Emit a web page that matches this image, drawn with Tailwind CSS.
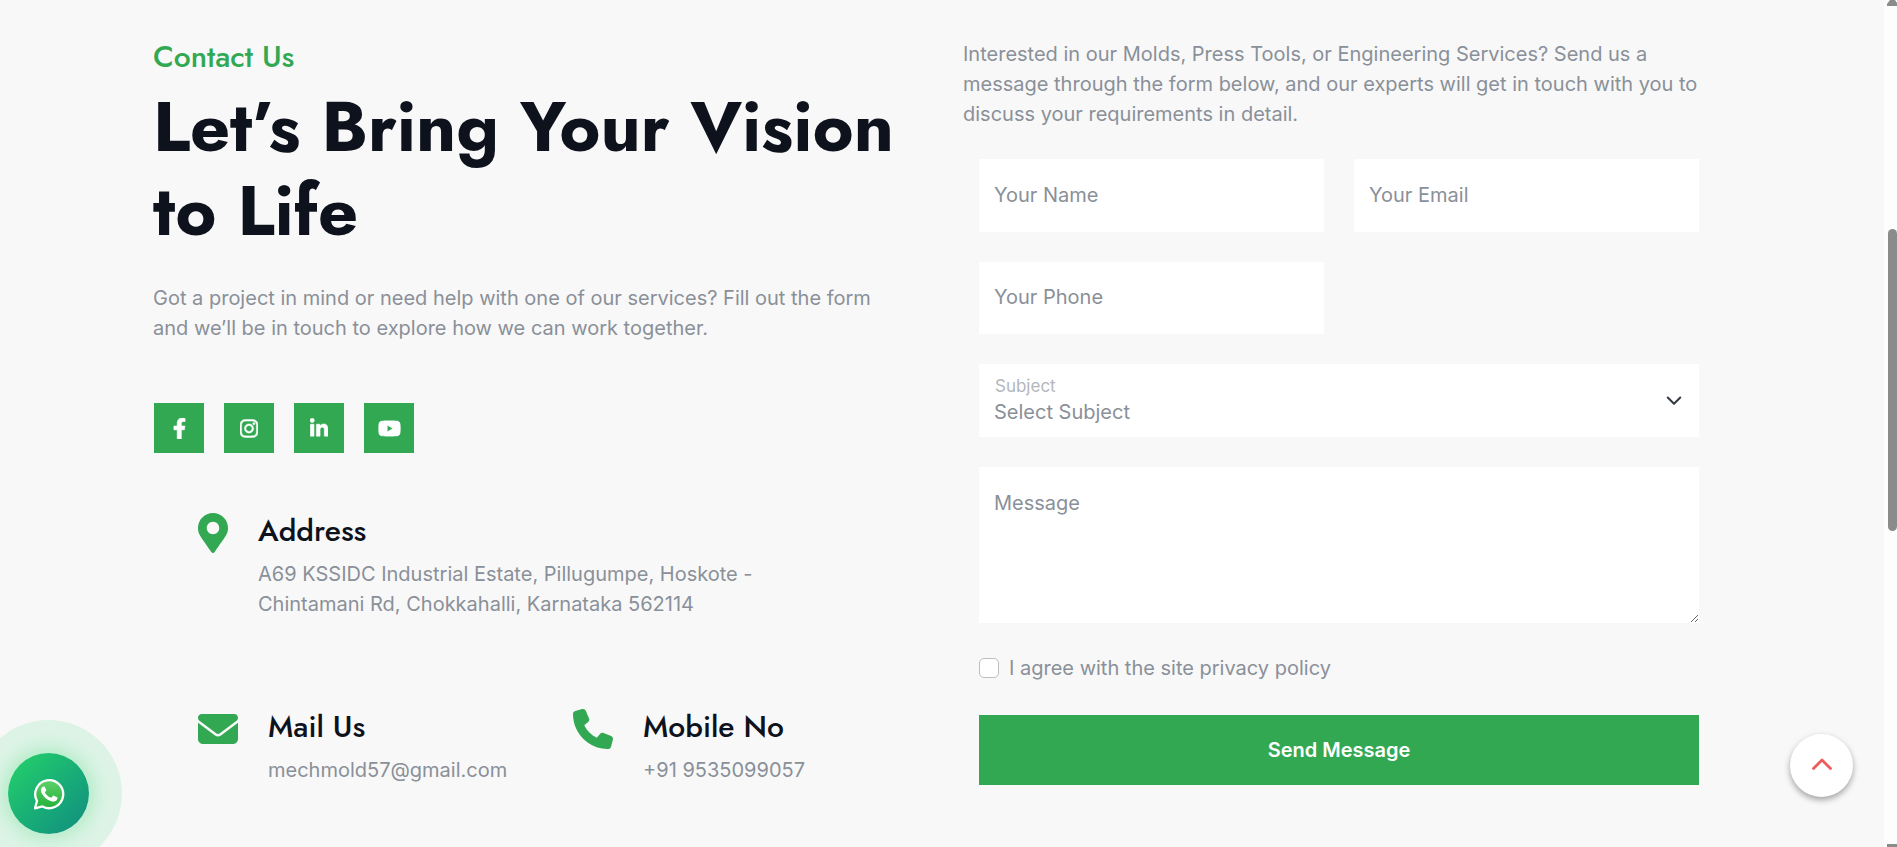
<!DOCTYPE html>
<html lang="en">
<head>
<meta charset="utf-8">
<meta name="viewport" content="width=device-width, initial-scale=1">
<title>Contact Us</title>
<script src="https://cdn.jsdelivr.net/npm/@tailwindcss/browser@4"></script>
</head>
<body class="flex min-h-screen overflow-hidden bg-[#f8f8f8] font-['Inter',sans-serif] text-[20px] leading-[30px] text-[#8a9099]">

<main class="grid min-w-0 flex-1 grid-cols-2 gap-[60px] pt-[38px] pr-[171px] pl-[153px]">
  <section>
    <p class="font-['Jost','Lato',sans-serif] text-[30px] leading-[38px] font-medium text-[#32a852]">Contact Us</p>
    <h1 class="mt-[9px] font-['Jost','Lato',sans-serif] text-[70px] leading-[84px] font-bold text-[#0d121d]">Let’s Bring Your Vision to Life</h1>
    <p class="mt-[30px] pr-4">Got a project in mind or need help with one of our services? Fill out the form and we’ll be in touch to explore how we can work together.</p>

    <nav class="mt-[60px] flex gap-5 pl-px" aria-label="Social media">
      <a href="#" aria-label="Facebook" class="flex size-[50px] items-center justify-center bg-[#32a852] text-white">
        <svg class="h-[21px] w-[13px]" viewBox="0 0 320 512" fill="currentColor" stroke="currentColor" stroke-width="16"><path d="M279.14 288l14.22-92.66h-88.91v-60.13c0-25.35 12.42-50.06 52.24-50.06h40.42V6.26S260.43 0 225.36 0c-73.22 0-121.08 44.38-121.08 124.72v70.62H22.89V288h81.39v224h100.17V288z"/></svg>
      </a>
      <a href="#" aria-label="Instagram" class="flex size-[50px] items-center justify-center bg-[#32a852] text-white">
        <svg class="h-[21px] w-[18px]" viewBox="0 0 448 512" fill="currentColor" stroke="currentColor" stroke-width="12"><path d="M224.1 141c-63.6 0-114.9 51.3-114.9 114.9s51.3 114.9 114.9 114.9S339 319.5 339 255.9 287.7 141 224.1 141zm0 189.6c-41.1 0-74.7-33.5-74.7-74.7s33.5-74.7 74.7-74.7 74.7 33.5 74.7 74.7-33.6 74.7-74.7 74.7zm146.4-194.3c0 14.9-12 26.8-26.8 26.8-14.9 0-26.8-12-26.8-26.8s12-26.8 26.8-26.8 26.8 12 26.8 26.8zm76.1 27.2c-1.7-35.9-9.9-67.7-36.2-93.9-26.2-26.2-58-34.4-93.9-36.2-37-2.1-147.9-2.1-184.9 0-35.8 1.7-67.6 9.9-93.9 36.1s-34.4 58-36.2 93.9c-2.1 37-2.1 147.9 0 184.9 1.7 35.9 9.9 67.7 36.2 93.9s58 34.4 93.9 36.2c37 2.1 147.9 2.1 184.9 0 35.9-1.7 67.7-9.9 93.9-36.2 26.2-26.2 34.4-58 36.2-93.9 2.1-37 2.1-147.8 0-184.8zM398.8 388c-7.8 19.6-22.9 34.7-42.6 42.6-29.5 11.7-99.5 9-132.1 9s-102.7 2.6-132.1-9c-19.6-7.8-34.7-22.9-42.6-42.6-11.7-29.5-9-99.5-9-132.1s-2.6-102.7 9-132.1c7.8-19.6 22.9-34.7 42.6-42.6 29.5-11.7 99.5-9 132.1-9s102.7-2.6 132.1 9c19.6 7.8 34.7 22.9 42.6 42.6 11.7 29.5 9 99.5 9 132.1s2.7 102.7-9 132.1z"/></svg>
      </a>
      <a href="#" aria-label="LinkedIn" class="flex size-[50px] items-center justify-center bg-[#32a852] text-white">
        <svg class="h-[21px] w-[18px]" viewBox="0 0 448 512" fill="currentColor" stroke="currentColor" stroke-width="12"><path d="M100.28 448H7.4V148.9h92.88zM53.79 108.1C24.09 108.1 0 83.5 0 53.8a53.79 53.79 0 0 1 107.58 0c0 29.7-24.1 54.3-53.79 54.3zM447.9 448h-92.68V302.4c0-34.7-.7-79.2-48.29-79.2-48.29 0-55.69 37.7-55.69 76.7V448h-92.78V148.9h89.08v40.8h1.3c12.4-23.5 42.69-48.3 87.88-48.3 94 0 111.28 61.9 111.28 142.3V448z"/></svg>
      </a>
      <a href="#" aria-label="YouTube" class="flex size-[50px] items-center justify-center bg-[#32a852] text-white">
        <svg class="h-[21px] w-[23px]" viewBox="0 0 576 512" fill="currentColor" stroke="currentColor" stroke-width="12"><path d="M549.655 124.083c-6.281-23.65-24.787-42.276-48.284-48.597C458.781 64 288 64 288 64S117.22 64 74.629 75.486c-23.497 6.322-42.003 24.947-48.284 48.597-11.412 42.867-11.412 132.305-11.412 132.305s0 89.438 11.412 132.305c6.281 23.65 24.787 41.5 48.284 47.821C117.22 448 288 448 288 448s170.78 0 213.371-11.486c23.497-6.321 42.003-24.171 48.284-47.821 11.412-42.867 11.412-132.305 11.412-132.305s0-89.438-11.412-132.305zm-317.51 213.508V175.185l142.739 81.205-142.739 81.201z"/></svg>
      </a>
    </nav>

    <address class="mt-[60px] flex flex-col gap-20 pl-[45px] not-italic">
      <div class="flex gap-[30px]">
        <svg class="h-10 w-[30px] shrink-0 text-[#32a852]" viewBox="0 0 384 512" fill="currentColor"><path d="M172.268 501.670C26.970 291.031 0 269.413 0 192 0 85.961 85.961 0 192 0s192 85.961 192 192c0 77.413-26.970 99.031-172.268 309.670-9.535 13.774-29.930 13.773-39.464 0zM192 272c44.183 0 80-35.817 80-80s-35.817-80-80-80-80 35.817-80 80 35.817 80 80 80z"/></svg>
        <div>
          <h2 class="font-['Jost','Lato',sans-serif] text-[30px] leading-9 font-medium text-[#0d121d]">Address</h2>
          <p class="mt-[10px]">A69 KSSIDC Industrial Estate, Pillugumpe, Hoskote -<br>Chintamani Rd, Chokkahalli, Karnataka 562114</p>
        </div>
      </div>
      <div class="flex">
        <div class="flex w-[375px] gap-[30px]">
          <svg class="mt-[10px] h-10 w-10 shrink-0 text-[#32a852]" viewBox="0 0 512 512" fill="currentColor"><path d="M48 64C21.500 64 0 85.500 0 112c0 15.100 7.100 29.300 19.200 38.400L236.800 313.600c11.400 8.500 27 8.500 38.400 0L492.800 150.400c12.100-9.100 19.200-23.300 19.200-38.400c0-26.500-21.500-48-48-48H48zM0 176V384c0 35.300 28.700 64 64 64H448c35.300 0 64-28.700 64-64V176L294.400 339.200c-22.800 17.100-54 17.100-76.800 0L0 176z"/></svg>
          <div class="mt-[10px]">
            <h2 class="font-['Jost','Lato',sans-serif] text-[30px] leading-9 font-medium text-[#0d121d]">Mail Us</h2>
            <p class="mt-[10px]"><a href="mailto:mechmold57@gmail.com">mechmold57@gmail.com</a></p>
          </div>
        </div>
        <div class="flex gap-[30px]">
          <svg class="mt-[10px] h-10 w-10 shrink-0 text-[#32a852]" viewBox="0 0 512 512" fill="currentColor"><path d="M164.900 24.600c-7.700-18.600-28-28.500-47.400-23.200l-88 24C12.100 30.200 0 46 0 64C0 311.400 200.600 512 448 512c18 0 33.800-12.100 38.600-29.500l24-88c5.300-19.400-4.600-39.700-23.200-47.400l-96-40c-16.300-6.800-35.200-2.100-46.300 11.600L304.700 368C234.300 334.700 177.300 277.700 144 207.300L193.300 167c13.700-11.200 18.400-30 11.600-46.300l-40-96z"/></svg>
          <div class="mt-[10px]">
            <h2 class="font-['Jost','Lato',sans-serif] text-[30px] leading-9 font-medium text-[#0d121d]">Mobile No</h2>
            <p class="mt-[10px]"><a href="tel:+919535099057">+91 9535099057</a></p>
          </div>
        </div>
      </div>
    </address>
  </section>

  <section class="pt-px">
    <p class="pr-[14px]">Interested in our Molds, Press Tools, or Engineering Services? Send us a message through the form below, and our experts will get in touch with you to discuss your requirements in detail.</p>
    <form class="mt-[30px] grid grid-cols-2 gap-[30px] pr-[14px] pl-4">
      <input type="text" aria-label="Your Name" placeholder="Your Name" class="h-[73px] w-full bg-white px-[15px] pb-0.5 placeholder:text-[#8a9099] outline-none">
      <input type="email" aria-label="Your Email" placeholder="Your Email" class="h-[73px] w-full bg-white px-[15px] pb-0.5 placeholder:text-[#8a9099] outline-none">
      <input type="tel" aria-label="Your Phone" placeholder="Your Phone" class="h-[72px] w-full bg-white px-[15px] pb-0.5 placeholder:text-[#8a9099] outline-none">
      <div class="relative col-span-2">
        <label for="subject" class="pointer-events-none absolute top-2 left-4 text-[17px] leading-7 text-[#b3b7bd]">Subject</label>
        <select id="subject" class="block h-[73px] w-full appearance-none bg-white pt-[22px] pr-12 pl-[15px] outline-none">
          <option>Select Subject</option>
        </select>
        <svg class="pointer-events-none absolute top-[26px] right-[15px] size-5 text-[#343a40]" viewBox="0 0 16 16" fill="none" stroke="currentColor" stroke-width="1.600" stroke-linecap="round" stroke-linejoin="round"><path d="m3 6 5 5 5-5"/></svg>
      </div>
      <textarea aria-label="Message" placeholder="Message" class="col-span-2 block h-[156px] w-full resize bg-white px-[15px] pt-[21px] placeholder:text-[#8a9099] outline-none"></textarea>
      <div class="col-span-2 flex items-center gap-[10px] pb-0.5">
        <input type="checkbox" id="agree" class="size-5 appearance-none rounded-[5px] border border-[#bfbfbf] bg-white checked:bg-[#32a852]">
        <label for="agree">I agree with the site privacy policy</label>
      </div>
      <button type="submit" class="col-span-2 h-[70px] bg-[#32a852] font-semibold text-white">Send Message</button>
    </form>
  </section>
</main>

<!-- Scroll track -->
<aside class="relative w-[13px] shrink-0 bg-[#fdfdfd]" aria-hidden="true">
  <svg class="absolute top-0 right-0 h-[6px] w-[10px]" viewBox="0 0 10 6" fill="#8b8b8b"><path d="M3 0h5l2 3v3H0V4z"/></svg>
  <div class="absolute top-[229px] right-0 h-[302px] w-[9px] rounded-full bg-[#8b8b8b]"></div>
  <div class="absolute right-0 bottom-0 h-[3px] w-[10px] bg-[#8b8b8b]"></div>
</aside>

<!-- WhatsApp launcher with pulse ring -->
<a href="#" aria-label="Chat on WhatsApp" class="fixed bottom-[13px] left-2 flex size-[81px] items-center justify-center rounded-full bg-linear-135 from-[#25d366] to-[#128c7e] shadow-[0_0_0_33px_rgba(37,211,102,0.12),0_0_25px_rgba(37,211,102,0.4)]">
  <svg class="size-8" viewBox="0 0 32 32">
    <defs><linearGradient id="wa" x1="0" y1="0" x2="0" y2="1"><stop offset="0" stop-color="#5fd16a"/><stop offset="1" stop-color="#22b13a"/></linearGradient></defs>
    <path d="M2 30.300 4 23A14 14 0 1 1 9.400 28.400Z" fill="url(#wa)" stroke="#fff" stroke-width="2.300" stroke-linejoin="round"/>
    <path d="M11.900 9.300c-.3-.7-.6-.7-1-.7-.8 0-1.300.2-1.700.7-.6.600-1.300 1.500-1.300 3.300s1.300 3.600 1.600 3.900c.2.300 2.800 4.400 6.900 6 3.400 1.400 4.100 1.100 4.900 1 .8-.1 2.500-1 2.800-2 .4-1 .4-1.800.3-2-.1-.2-.4-.3-.8-.5l-2.800-1.300c-.4-.2-.7-.2-1 .2l-1.300 1.600c-.2.300-.5.300-.9.100-.4-.2-1.700-.6-3.300-2-1.200-1.100-2-2.400-2.300-2.900-.2-.4 0-.6.200-.8.500-.5.800-.9 1-1.300.2-.3.100-.6 0-.8z" fill="#fff"/>
  </svg>
</a>

<!-- Back to top -->
<button type="button" aria-label="Back to top" class="fixed right-11 bottom-[50px] flex size-[63px] items-center justify-center rounded-full bg-white pb-1 shadow-[0_3px_6px_rgba(0,0,0,0.35)]">
  <svg class="h-3 w-5" viewBox="0 0 20 12" fill="none" stroke="#ef5b5b" stroke-width="2.800" stroke-linecap="round" stroke-linejoin="round"><path d="m1.500 10.500 8.500-8.500 8.500 8.500"/></svg>
</button>
</body>
</html>
